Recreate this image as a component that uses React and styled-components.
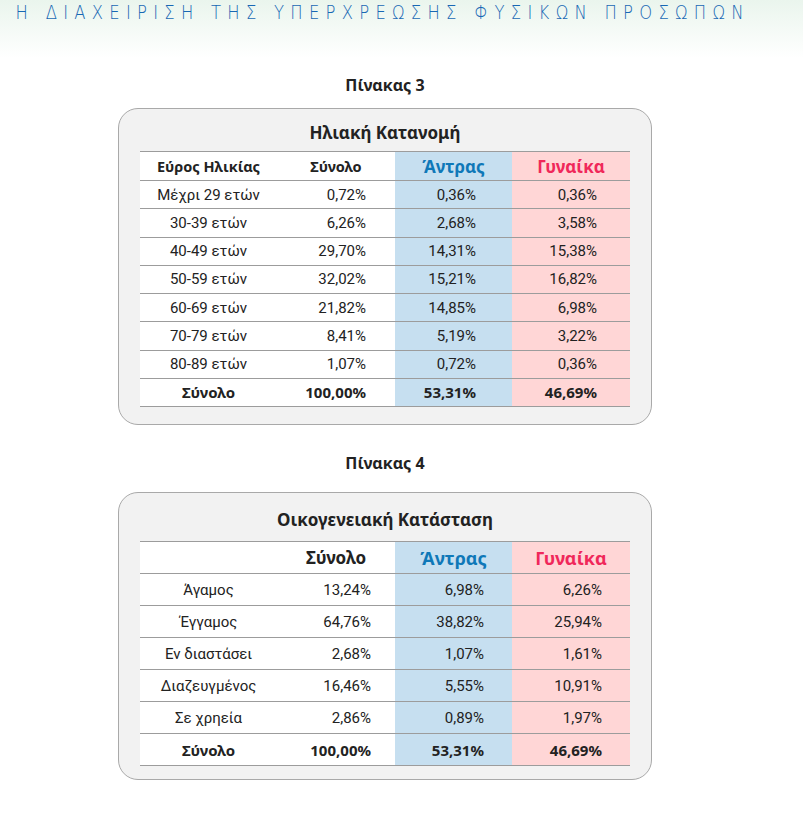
import React from 'react';
import styled, { createGlobalStyle } from 'styled-components';

const GlobalStyle = createGlobalStyle`
  body {
    margin: 0;
    background: #ffffff;
    font-family: "Noto Sans", sans-serif;
    color: #222;
  }
`;

const Page = styled.div`
  width: 803px;
  min-height: 813px;
  background: linear-gradient(to bottom, #eaf5ed 0px, #ffffff 58px);
`;

const Banner = styled.div`
  height: 52px;
  padding-left: 19px;
  font-family: "DejaVu Sans", sans-serif;
  font-weight: 200;
  font-size: 20px;
  line-height: 25px;
  letter-spacing: 7.65px;
  color: #1868b4;
  white-space: nowrap;
  transform: scaleX(0.82);
  transform-origin: left top;
`;

const Column = styled.div`
  width: 534px;
  margin-left: 118px;
  display: flex;
  flex-direction: column;
`;

const Caption = styled.div`
  text-align: center;
  font-weight: 700;
  font-size: 16px;
  line-height: 20px;
  color: #222;
  margin-top: ${(p) => p.$top}px;
  margin-bottom: ${(p) => p.$bottom}px;
`;

const Card = styled.div`
  box-sizing: border-box;
  border: 1px solid #a9a9a9;
  border-radius: 20px;
  background: #f2f2f2;
  padding: ${(p) => p.$padTop}px 21px ${(p) => p.$padBottom}px;
  display: flex;
  flex-direction: column;
`;

const CardTitle = styled.div`
  text-align: center;
  font-weight: 700;
  font-size: 17px;
  line-height: 24px;
  color: #222;
  margin-bottom: ${(p) => p.$gap}px;
`;

const Grid = styled.div`
  display: flex;
  flex-direction: column;
  border-bottom: 1px solid #9c9c9c;
`;

const Row = styled.div`
  display: grid;
  grid-template-columns: 137px 118px 117px 118px;
  height: ${(p) => p.$h}px;
  box-sizing: border-box;
  border-top: 1px solid #9c9c9c;
`;

const Cell = styled.div`
  display: flex;
  align-items: center;
  justify-content: ${(p) => (p.$center ? 'center' : 'flex-end')};
  padding-right: ${(p) => (p.$center ? 0 : p.$pad)}px;
  background: ${(p) => (p.$tone === 'm' ? '#c6dff0' : p.$tone === 'f' ? '#ffd6d6' : '#ffffff')};
  font-family: ${(p) => (p.$head || p.$bold ? '"Noto Sans", sans-serif' : 'Roboto, sans-serif')};
  font-weight: ${(p) => (p.$head || p.$bold ? 700 : 400)};
  font-size: ${(p) => (p.$head ? p.$size : 15)}px;
  color: ${(p) => (p.$head && p.$tone === 'm' ? '#0f78b8' : p.$head && p.$tone === 'f' ? '#f0285a' : '#222')};
  white-space: nowrap;
`;

const ageRows = [
  ['Μέχρι 29 ετών', '0,72%', '0,36%', '0,36%'],
  ['30-39 ετών', '6,26%', '2,68%', '3,58%'],
  ['40-49 ετών', '29,70%', '14,31%', '15,38%'],
  ['50-59 ετών', '32,02%', '15,21%', '16,82%'],
  ['60-69 ετών', '21,82%', '14,85%', '6,98%'],
  ['70-79 ετών', '8,41%', '5,19%', '3,22%'],
  ['80-89 ετών', '1,07%', '0,72%', '0,36%'],
];

const familyRows = [
  ['Άγαμος', '13,24%', '6,98%', '6,26%'],
  ['Έγγαμος', '64,76%', '38,82%', '25,94%'],
  ['Εν διαστάσει', '2,68%', '1,07%', '1,61%'],
  ['Διαζευγμένος', '16,46%', '5,55%', '10,91%'],
  ['Σε χρηεία', '2,86%', '0,89%', '1,97%'],
];

const DataTable = ({ firstHead, rows, headH, rowH, headSize, sexSize, pads, total }) => (
  <Grid>
    <Row $h={headH}>
      <Cell $center $head $size={headSize}>{firstHead}</Cell>
      <Cell $center $head $size={headSize}>Σύνολο</Cell>
      <Cell $center $head $size={sexSize} $tone="m">Άντρας</Cell>
      <Cell $center $head $size={sexSize} $tone="f">Γυναίκα</Cell>
    </Row>
    {rows.map((r) => (
      <Row key={r[0]} $h={rowH}>
        <Cell $center>{r[0]}</Cell>
        <Cell $pad={pads[0]}>{r[1]}</Cell>
        <Cell $pad={pads[1]} $tone="m">{r[2]}</Cell>
        <Cell $pad={pads[2]} $tone="f">{r[3]}</Cell>
      </Row>
    ))}
    <Row $h={rowH}>
      <Cell $center $bold>Σύνολο</Cell>
      <Cell $pad={pads[0]} $bold>{total[0]}</Cell>
      <Cell $pad={pads[1]} $bold $tone="m">{total[1]}</Cell>
      <Cell $pad={pads[2]} $bold $tone="f">{total[2]}</Cell>
    </Row>
  </Grid>
);

const App = () => (
  <>
    <GlobalStyle />
    <Page>
      <Banner>Η ΔΙΑΧΕΙΡΙΣΗ ΤΗΣ ΥΠΕΡΧΡΕΩΣΗΣ ΦΥΣΙΚΩΝ ΠΡΟΣΩΠΩΝ</Banner>
      <Column>
        <Caption $top={23} $bottom={13}>Πίνακας 3</Caption>
        <Card $padTop={12} $padBottom={17}>
          <CardTitle $gap={6}>Ηλιακή Κατανομή</CardTitle>
          <DataTable
            firstHead="Εύρος Ηλικίας"
            rows={ageRows}
            headH={29}
            rowH={28.25}
            headSize={14.5}
            sexSize={17}
            pads={[29, 36, 33]}
            total={['100,00%', '53,31%', '46,69%']}
          />
        </Card>
        <Caption $top={28} $bottom={19}>Πίνακας 4</Caption>
        <Card $padTop={15} $padBottom={13}>
          <CardTitle $gap={9}>Οικογενειακή Κατάσταση</CardTitle>
          <DataTable
            firstHead=""
            rows={familyRows}
            headH={32}
            rowH={32}
            headSize={17}
            sexSize={18}
            pads={[24, 28, 28]}
            total={['100,00%', '53,31%', '46,69%']}
          />
        </Card>
      </Column>
    </Page>
  </>
);

export default App;
